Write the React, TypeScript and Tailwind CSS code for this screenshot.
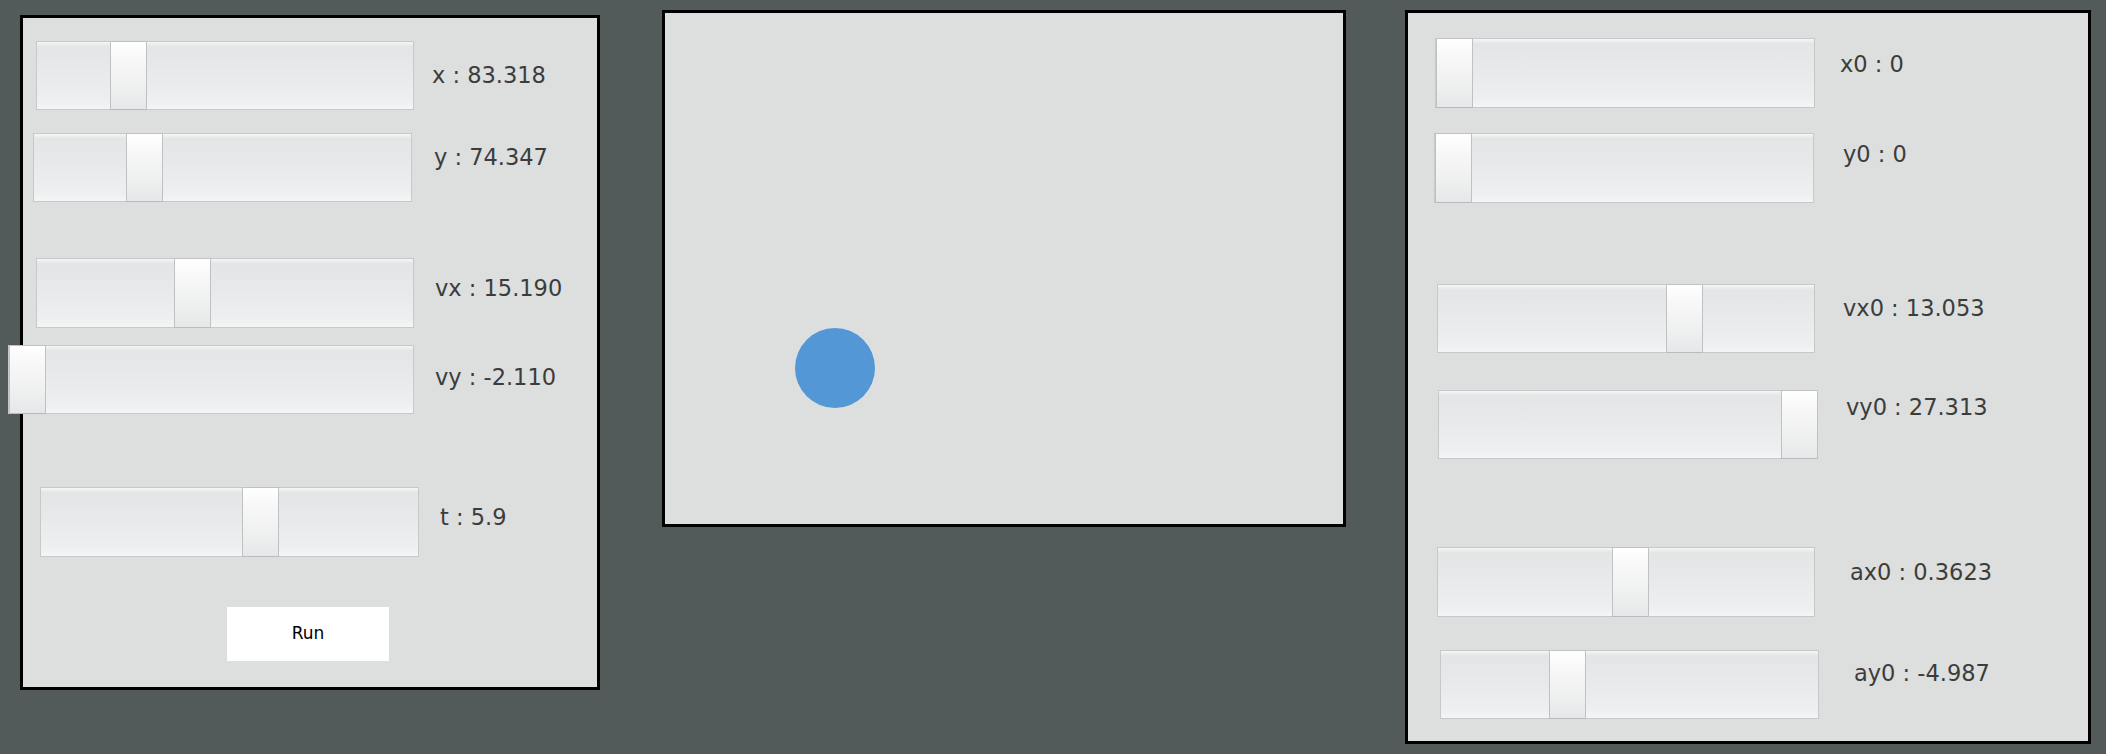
import type { ReactNode } from "react";

const labelFont = { fontFamily: '"DejaVu Sans", "Liberation Sans", sans-serif' };

type SliderRow = {
  label: string;
  rowClass: string;
  trackClass: string;
  thumbClass: string;
  labelClass: string;
};

const leftRows: SliderRow[] = [
  { label: "x : 83.318", rowClass: "mt-[23px]", trackClass: "ml-[13px] w-[378px] h-[69px]", thumbClass: "left-[73px]", labelClass: "ml-[18px] mt-[19px]" },
  { label: "y : 74.347", rowClass: "mt-[23px]", trackClass: "ml-[10px] w-[379px] h-[69px]", thumbClass: "left-[92px]", labelClass: "ml-[22px] mt-[9px]" },
  { label: "vx : 15.190", rowClass: "mt-[56px]", trackClass: "ml-[13px] w-[378px] h-[70px]", thumbClass: "left-[137px]", labelClass: "ml-[21px] mt-[15px]" },
  { label: "vy : -2.110", rowClass: "mt-[17px]", trackClass: "-ml-[15px] w-[406px] h-[69px]", thumbClass: "left-0", labelClass: "ml-[21px] mt-[17px]" },
  { label: "t : 5.9", rowClass: "mt-[73px]", trackClass: "ml-[17px] w-[379px] h-[70px]", thumbClass: "left-[201px]", labelClass: "ml-[21px] mt-[15px]" },
];

const rightRows: SliderRow[] = [
  { label: "x0 : 0", rowClass: "mt-[25px]", trackClass: "ml-[27px] w-[380px] h-[70px]", thumbClass: "left-0", labelClass: "ml-[25px] mt-[11px]" },
  { label: "y0 : 0", rowClass: "mt-[25px]", trackClass: "ml-[26px] w-[380px] h-[70px]", thumbClass: "left-0", labelClass: "ml-[29px] mt-[6px]" },
  { label: "vx0 : 13.053", rowClass: "mt-[81px]", trackClass: "ml-[29px] w-[378px] h-[69px]", thumbClass: "left-[228px]", labelClass: "ml-[28px] mt-[9px]" },
  { label: "vy0 : 27.313", rowClass: "mt-[37px]", trackClass: "ml-[30px] w-[379px] h-[69px]", thumbClass: "left-[342px]", labelClass: "ml-[29px] mt-[2px]" },
  { label: "ax0 : 0.3623", rowClass: "mt-[88px]", trackClass: "ml-[29px] w-[378px] h-[70px]", thumbClass: "left-[174px]", labelClass: "ml-[35px] mt-[10px]" },
  { label: "ay0 : -4.987", rowClass: "mt-[33px]", trackClass: "ml-[32px] w-[379px] h-[69px]", thumbClass: "left-[108px]", labelClass: "ml-[35px] mt-[8px]" },
];

function Slider({ row }: { row: SliderRow }) {
  return (
    <div className={`flex shrink-0 items-start ${row.rowClass}`}>
      <div
        className={`relative shrink-0 border border-[#c6c8ca] bg-[linear-gradient(to_bottom,#f5f6f6_0%,#e3e5e6_7%,#e8e9eb_45%,#eeeff0_88%,#f4f5f6_100%)] ${row.trackClass}`}
      >
        <div
          className={`absolute -top-px -bottom-px w-[37px] border border-[#bfc1c3] border-b-[#b8babc] bg-[linear-gradient(to_bottom,#ffffff_0%,#f8f8f8_25%,#eeefef_70%,#e6e7e9_100%)] ${row.thumbClass}`}
        />
      </div>
      <span
        className={`whitespace-nowrap text-[22.5px] leading-[30px] text-[#3c3c3c] ${row.labelClass}`}
        style={labelFont}
      >
        {row.label}
      </span>
    </div>
  );
}

function Panel({ className, children }: { className: string; children: ReactNode }) {
  return (
    <div className={`flex shrink-0 flex-col border-[3px] border-black bg-[#dddfde] ${className}`}>
      {children}
    </div>
  );
}

export default function App() {
  return (
    <div className="flex h-[754px] w-[2106px] items-start overflow-hidden bg-[#525b5a]">
      <Panel className="ml-[20px] mt-[15px] h-[675px] w-[580px]">
        {leftRows.map((row) => (
          <Slider key={row.label} row={row} />
        ))}
        <button
          className="ml-[204px] mt-[50px] h-[54px] w-[162px] bg-white text-[17px] text-black"
          style={labelFont}
        >
          Run
        </button>
      </Panel>

      <div className="relative ml-[62px] mt-[10px] h-[517px] w-[684px] shrink-0 border-[3px] border-black bg-[#dddfde]">
        <div className="absolute left-[130px] top-[315px] h-[80px] w-[80px] rounded-full bg-[#5397d6]" />
      </div>

      <Panel className="ml-[59px] mt-[10px] h-[734px] w-[686px]">
        {rightRows.map((row) => (
          <Slider key={row.label} row={row} />
        ))}
      </Panel>
    </div>
  );
}
